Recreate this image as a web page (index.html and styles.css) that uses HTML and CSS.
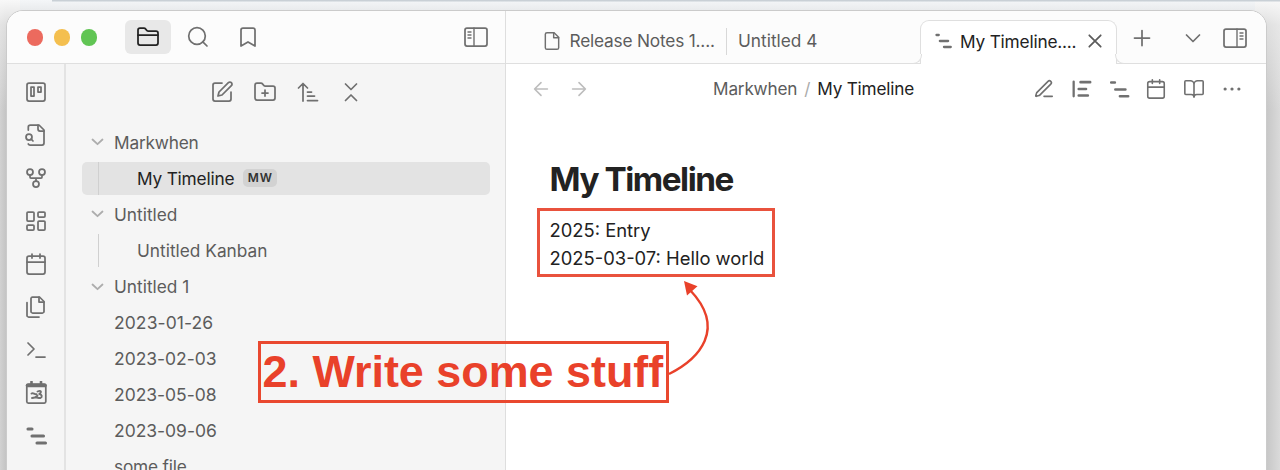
FILE: index.html
```html
<!DOCTYPE html>
<html lang="en">
<head>
<meta charset="utf-8">
<title>My Timeline</title>
<link rel="stylesheet" href="styles.css">
</head>
<body>
<div class="window">
  <aside class="left">
    <header class="titlebar">
      <div class="lights"><i class="light red"></i><i class="light yellow"></i><i class="light green"></i></div>
      <div class="modes">
        <span class="mode current"><svg class="icon" viewBox="0 0 24 24"><path d="M20 20a2 2 0 0 0 2-2V8a2 2 0 0 0-2-2h-7.9a2 2 0 0 1-1.69-.9L9.6 3.9A2 2 0 0 0 7.93 3H4a2 2 0 0 0-2 2v13a2 2 0 0 0 2 2Z"/><path d="M2 10h20"/></svg></span>
        <span class="mode"><svg class="icon" viewBox="0 0 24 24"><circle cx="11" cy="11" r="8.3"/><path d="m21 21-4.2-4.2"/></svg></span>
        <span class="mode"><svg class="icon" viewBox="0 0 24 24"><path d="m19 21-7-4-7 4V5a2 2 0 0 1 2-2h10a2 2 0 0 1 2 2z"/></svg></span>
      </div>
      <svg class="icon toggle" viewBox="0 0 24 24"><rect x="1" y="3" width="22" height="18" rx="2"/><path d="M10 3v18M4 7h3M4 10h3M4 13h3" stroke-width="1.4"/></svg>
    </header>
    <div class="left-body">
      <nav class="ribbon">
        <svg class="icon" viewBox="0 0 24 24"><rect x="3" y="3" width="18" height="18" rx="2"/><rect x="7" y="7" width="3" height="9"/><rect x="14" y="7" width="3" height="5"/></svg>
        <svg class="icon" viewBox="0 0 24 24"><path d="M14 2v4a2 2 0 0 0 2 2h4"/><path d="M4.3 7V4a2 2 0 0 1 2-2H15l5 5v13a2 2 0 0 1-2 2H6a2 2 0 0 1-1.7-1"/><circle cx="5" cy="14" r="3"/><path d="m9 18-1.8-1.8"/></svg>
        <svg class="icon" viewBox="0 0 24 24"><circle cx="12" cy="18" r="3"/><circle cx="6" cy="6" r="3"/><circle cx="18" cy="6" r="3"/><path d="M18 9v2c0 .6-.4 1-1 1H7c-.6 0-1-.4-1-1V9M12 12v3"/></svg>
        <svg class="icon" viewBox="0 0 24 24"><rect x="3" y="3" width="7" height="9" rx="1"/><rect x="14" y="3" width="7" height="5" rx="1"/><rect x="14" y="12" width="7" height="9" rx="1"/><rect x="3" y="16" width="7" height="5" rx="1"/></svg>
        <svg class="icon" viewBox="0 0 24 24"><rect x="3" y="4" width="18" height="18" rx="2"/><path d="M8 2v4M16 2v4M3 10h18"/></svg>
        <svg class="icon" viewBox="0 0 24 24"><path d="M15.5 2H8.6a2 2 0 0 0-1.1.5c-.3.3-.5.7-.5 1.1v12.8c0 .4.2.8.5 1.1.3.3.7.5 1.1.5h9.8c.4 0 .8-.2 1.1-.5.3-.3.5-.7.5-1.1V6.5z"/><path d="M3 7.6v12.8c0 .4.2.8.5 1.1.3.3.7.5 1.1.5H15M15 2v5h5"/></svg>
        <svg class="icon" viewBox="0 0 24 24"><path d="m4 17 6-6-6-6M12 19h9"/></svg>
        <svg class="icon" viewBox="0 0 24 24"><rect x="2.8" y="3" width="19" height="19" rx="1.500"/><path d="M3.500 4.500h17.500" stroke-width="3.600"/><path d="M7.500.800v3M17 .800v3" stroke-width="2.600"/><path d="M7.500 12.500c2-1.200 2.500 1 5 .8M13.500 10.500c3.500-1.500 4.500 0 2 2.500" stroke-width="1.900"/><path d="M15.500 13c2.500.5 3 3 1 4-2 .3-3-.6-4.500-.4M8 17c2 0 4-.4 5.500-2.500" stroke-width="1.900"/></svg>
        <svg class="icon bars" viewBox="0 0 24 24"><path d="M4 5h4M8 12h11.500M13 19h8.500"/></svg>
      </nav>
      <section class="explorer">
        <div class="tools">
          <svg class="icon" viewBox="0 0 24 24"><path d="M12 3H5a2 2 0 0 0-2 2v14a2 2 0 0 0 2 2h14a2 2 0 0 0 2-2v-7"/><path d="M18.375 2.625a2.121 2.121 0 1 1 3 3L12 15l-4 1 1-4Z"/></svg>
          <svg class="icon" viewBox="0 0 24 24"><path d="M12 10v6M9 13h6M20 20a2 2 0 0 0 2-2V8a2 2 0 0 0-2-2h-7.9a2 2 0 0 1-1.69-.9L9.6 3.9A2 2 0 0 0 7.93 3H4a2 2 0 0 0-2 2v13a2 2 0 0 0 2 2Z"/></svg>
          <svg class="icon" viewBox="0 0 24 24"><path d="m2.500 8 4.500-4.500L11.500 8M7 4v17M11.500 12h4M11.500 16h7M11.500 20.500h10"/></svg>
          <svg class="icon" viewBox="0 0 24 24"><path d="m6.500 20.500 5.500-5.500 5.500 5.500M6.500 4l5.500 5.500L17.500 4"/></svg>
        </div>
        <ul class="tree">
          <li class="row"><svg class="chev" viewBox="0 0 12 8"><path d="m1 1.500 5 4.700 5-4.700"/></svg><span>Markwhen</span></li>
          <li class="row child selected"><span>My Timeline</span><b class="tag">MW</b></li>
          <li class="row"><svg class="chev" viewBox="0 0 12 8"><path d="m1 1.500 5 4.700 5-4.700"/></svg><span class="wide">Untitled</span></li>
          <li class="row child"><span class="wide">Untitled Kanban</span></li>
          <li class="row"><svg class="chev" viewBox="0 0 12 8"><path d="m1 1.500 5 4.700 5-4.700"/></svg><span class="wide">Untitled 1</span></li>
          <li class="row file"><span class="date first-date">2023-01-26</span></li>
          <li class="row file"><span class="date">2023-02-03</span></li>
          <li class="row file"><span class="date">2023-05-08</span></li>
          <li class="row file"><span class="date">2023-09-06</span></li>
          <li class="row file"><span>some file</span></li>
        </ul>
      </section>
    </div>
  </aside>
  <main class="right">
    <header class="tabs">
      <div class="tab first"><svg class="icon small" viewBox="0 0 24 24"><path d="M14.500 2H6a2 2 0 0 0-2 2v16a2 2 0 0 0 2 2h12a2 2 0 0 0 2-2V7.500z"/><path d="M14 2v6h6"/></svg><span>Release Notes 1....</span></div>
      <div class="tab second"><span class="wide">Untitled 4</span></div>
      <div class="tab active"><svg class="icon mini bars" viewBox="0 0 24 24"><path d="M2 4h3M6.500 12h11M12 20h9"/></svg><span>My Timeline....</span><svg class="icon close" viewBox="0 0 24 24"><path d="M17.700 6.300 6.300 17.700M6.300 6.300l11.400 11.400"/></svg></div>
      <div class="tab-actions">
        <svg class="icon" viewBox="0 0 24 24"><path d="M4.500 12h15M12 4.500v15"/></svg>
        <svg class="icon down" viewBox="0 0 24 24"><path d="m5.500 9 6.500 6.500L18.500 9"/></svg>
        <svg class="icon" viewBox="0 0 24 24"><rect x="1" y="3" width="22" height="18" rx="2"/><path d="M14 3v18M17 7h3M17 10h3M17 13h3" stroke-width="1.4"/></svg>
      </div>
    </header>
    <div class="view-head">
      <div class="history">
        <svg class="icon mid" viewBox="0 0 24 24"><path d="m12 19-7-7 7-7M19 12H5"/></svg>
        <svg class="icon mid" viewBox="0 0 24 24"><path d="M5 12h14M12 5l7 7-7 7"/></svg>
      </div>
      <div class="crumbs"><span>Markwhen</span><span class="slash">/</span><span class="here">My Timeline</span></div>
      <div class="view-actions">
        <svg class="icon mid" viewBox="0 0 24 24"><path d="M12 20h9M16.376 3.622a1 1 0 0 1 3.002 3.002L7.368 18.635a2 2 0 0 1-.855.506l-2.872.838a.5.5 0 0 1-.62-.62l.838-2.872a2 2 0 0 1 .506-.854z"/></svg>
        <svg class="icon mid bars thin" viewBox="0 0 24 24"><path d="M4 4v16" stroke-width="2.500"/><path d="M11.500 4.500h10.500M9.500 12h8M9.500 19h10"/></svg>
        <svg class="icon mid bars thin" viewBox="0 0 24 24"><path d="M3.500 5h4M8 12.500h11M13 20h9"/></svg>
        <svg class="icon mid" viewBox="0 0 24 24"><rect x="3" y="4" width="18" height="18" rx="2"/><path d="M8 2v4M16 2v4M3 10h18"/></svg>
        <svg class="icon mid" viewBox="0 0 24 24"><path d="M12 7v14M3 18a1 1 0 0 1-1-1V4a1 1 0 0 1 1-1h5a4 4 0 0 1 4 4 4 4 0 0 1 4-4h5a1 1 0 0 1 1 1v13a1 1 0 0 1-1 1h-6a3 3 0 0 0-3 3 3 3 0 0 0-3-3z"/></svg>
        <svg class="icon mid" viewBox="0 0 24 24"><path d="M4.500 12h.01M12 12h.01M19.500 12h.01" stroke-width="3.500"/></svg>
      </div>
    </div>
    <article class="note">
      <h1>My Timeline</h1>
      <div class="entries"><p>2025: Entry</p><p>2025-03-07: Hello world</p></div>
    </article>
  </main>
</div>
<div class="callout">2. Write some stuff</div>
<svg class="arrow" viewBox="0 0 60 110"><path d="M9 104C39 89 67 59 30 20" fill="none" stroke="#e9412a" stroke-width="2.4"/><path d="M24 11 37.500 16.200 27 25.500Z" fill="#e9412a"/></svg>
</body>
</html>
```

FILE: styles.css
```css
* { box-sizing: border-box; }
body {
  margin: 0; width: 1280px; height: 470px; overflow: hidden; position: relative;
  padding: 10px 13px 0 6px;
  font-family: Inter, "Liberation Sans", sans-serif; font-size: 17.3px; letter-spacing: -.2px; color: #5c5c5c;
  background:
    linear-gradient(90deg, transparent 52px, #c9d0d6 52px) 0 0 / 100% 1.5px no-repeat,
    linear-gradient(180deg, #f4f6f8 0, #e9ebed 10px, transparent 10px) 20px 0 / 1235px 100% no-repeat,
    linear-gradient(180deg, rgba(248,248,248,1) 0, rgba(240,240,240,.6) 25px, transparent 110px),
    linear-gradient(90deg, #d2d2d2 0, #c2c2c2 7px, #c6c6c6 1266px, #dadada 1280px);
}
svg { display: block; flex: none; }
.window { display: flex; height: 480px; border: 1px solid #cbcbcb; border-radius: 17px; overflow: hidden; background: #fff; }
.icon { width: 24px; height: 24px; fill: none; stroke: #707070; stroke-width: 1.75; stroke-linecap: round; stroke-linejoin: round; }
.mid { width: 22px; height: 22px; }
.small { width: 20px; height: 20px; }
.mini { width: 18px; height: 18px; }
.bars { stroke-width: 3.1; }
.thin { stroke-width: 2.8; }

.left { width: 499px; flex: none; border-right: 1px solid #dedede; display: flex; flex-direction: column; }
.titlebar { height: 53px; flex: none; display: flex; align-items: center; padding: 0 17.5px 0 19.5px; background: #fcfcfc; border-bottom: 1px solid #dfdfdf; }
.lights { display: flex; gap: 10.5px; padding-top: 1px; }
.light { width: 16.5px; height: 16.5px; border-radius: 50%; }
.red { background: #ec6a5e; }
.yellow { background: #f4bf4f; }
.green { background: #61c554; }
.modes { display: flex; gap: 4px; margin-left: 27.5px; }
.mode { width: 46px; height: 34px; border-radius: 6px; display: grid; place-items: center; }
.current { background: #e8e8e8; }
.current .icon { stroke: #222; }
.toggle { margin-left: auto; }

.left-body { flex: 1; display: flex; background: #f5f5f5; }
.ribbon { width: 59px; border-right: 2px solid #e3e3e3; display: flex; flex-direction: column; align-items: center; gap: 19px; padding: 16px 0 0; }
.explorer { flex: 1; padding: 16px 15px 0 16px; }
.tools { display: flex; justify-content: center; gap: 19px; }
.tree { list-style: none; margin: 20.4px 0 0; padding: 0; }
.row { height: 36.05px; display: flex; align-items: center; padding-left: 9px; white-space: nowrap; }
.chev { width: 13px; height: 8px; margin-right: 10px; fill: none; stroke: #adadad; stroke-width: 1.8; stroke-linecap: round; stroke-linejoin: round; }
.file { padding-left: 32px; }
.date { font-size: 17.5px; letter-spacing: -.03px; }
.first-date { letter-spacing: .08px; }
.wide { letter-spacing: 0; }
.child { padding-left: 0; }
.child::before { content: ""; width: 1px; height: 33px; margin: 0 38px 0 16px; background: #d0d0d0; }
.selected { height: 33px; margin: 1.5px 0; border-radius: 5px; background: #e3e3e3; color: #222; }
.tag { margin-left: 9px; width: 34px; height: 18px; border-radius: 5px; background: #d2d2d2; font-size: 12px; font-weight: 600; line-height: 18px; text-align: center; letter-spacing: .8px; color: #333; }

.right { flex: 1; min-width: 0; display: flex; flex-direction: column; }
.tabs { height: 53px; flex: none; display: flex; align-items: flex-end; background: #fcfcfc; box-shadow: inset 0 -1px #dfdfdf; }
.tab { display: flex; align-items: center; height: 44px; padding-bottom: 3px; white-space: nowrap; }
.first { width: 220px; padding-left: 36px; }
.first span { margin-left: 7.5px; }
.second { width: 194px; padding-left: 12px; background: linear-gradient(#d8d8d8, #d8d8d8) 0 8px / 1px 27px no-repeat; }
.active { position: relative; width: 197px; padding-left: 14px; background: #fff; border: 1px solid #dfdfdf; border-bottom: 0; border-radius: 9px 9px 0 0; color: #222; }
.active::before, .active::after { content: ""; position: absolute; bottom: 0; width: 9px; height: 9px; border: 1px solid #dfdfdf; border-top: 0; background: #fcfcfc; }
.active::before { left: -9px; border-left: 0; border-bottom-right-radius: 9px; }
.active::after { right: -9px; border-right: 0; border-bottom-left-radius: 9px; }
.active span { margin-left: 7px; }
.close { margin-left: 7px; stroke: #5c5c5c; }
.tab-actions { height: 53px; display: flex; flex: 1; align-items: center; justify-content: space-between; padding: 0 19px 0 13px; }
.down { margin-left: 8px; }
.view-head { display: flex; align-items: center; justify-content: space-between; height: 50px; padding: 0 23.5px 0 24px; }
.history { display: flex; gap: 15.5px; }
.history .icon { stroke: #bdbdbd; }
.crumbs { display: flex; margin-left: 5px; padding-bottom: 1px; font-size: 17.2px; }
.slash { margin: 0 7px; color: #ababab; }
.here { color: #222; }
.view-actions { display: flex; gap: 15.6px; }
.note { padding: 41px 0 0 31px; color: #222; }
h1 { margin: 0 0 5px 12.5px; font-size: 33.3px; line-height: 48px; font-weight: 700; letter-spacing: -1.45px; }
.entries { width: 238px; height: 69px; border: 3px solid #e9523d; padding: 5px 0 0 9.5px; font-size: 18.4px; letter-spacing: 0; line-height: 28px; white-space: nowrap; }
p { margin: 0; }

.callout { position: absolute; left: 258px; top: 341px; width: 411px; height: 62px; border: 3px solid #e9482f; padding-left: 1.5px; font: bold 44.9px/55px "Liberation Sans", Arial, sans-serif; letter-spacing: 0; color: #e9412a; white-space: nowrap; }
.arrow { position: absolute; left: 660px; top: 270px; width: 60px; height: 110px; }
```
